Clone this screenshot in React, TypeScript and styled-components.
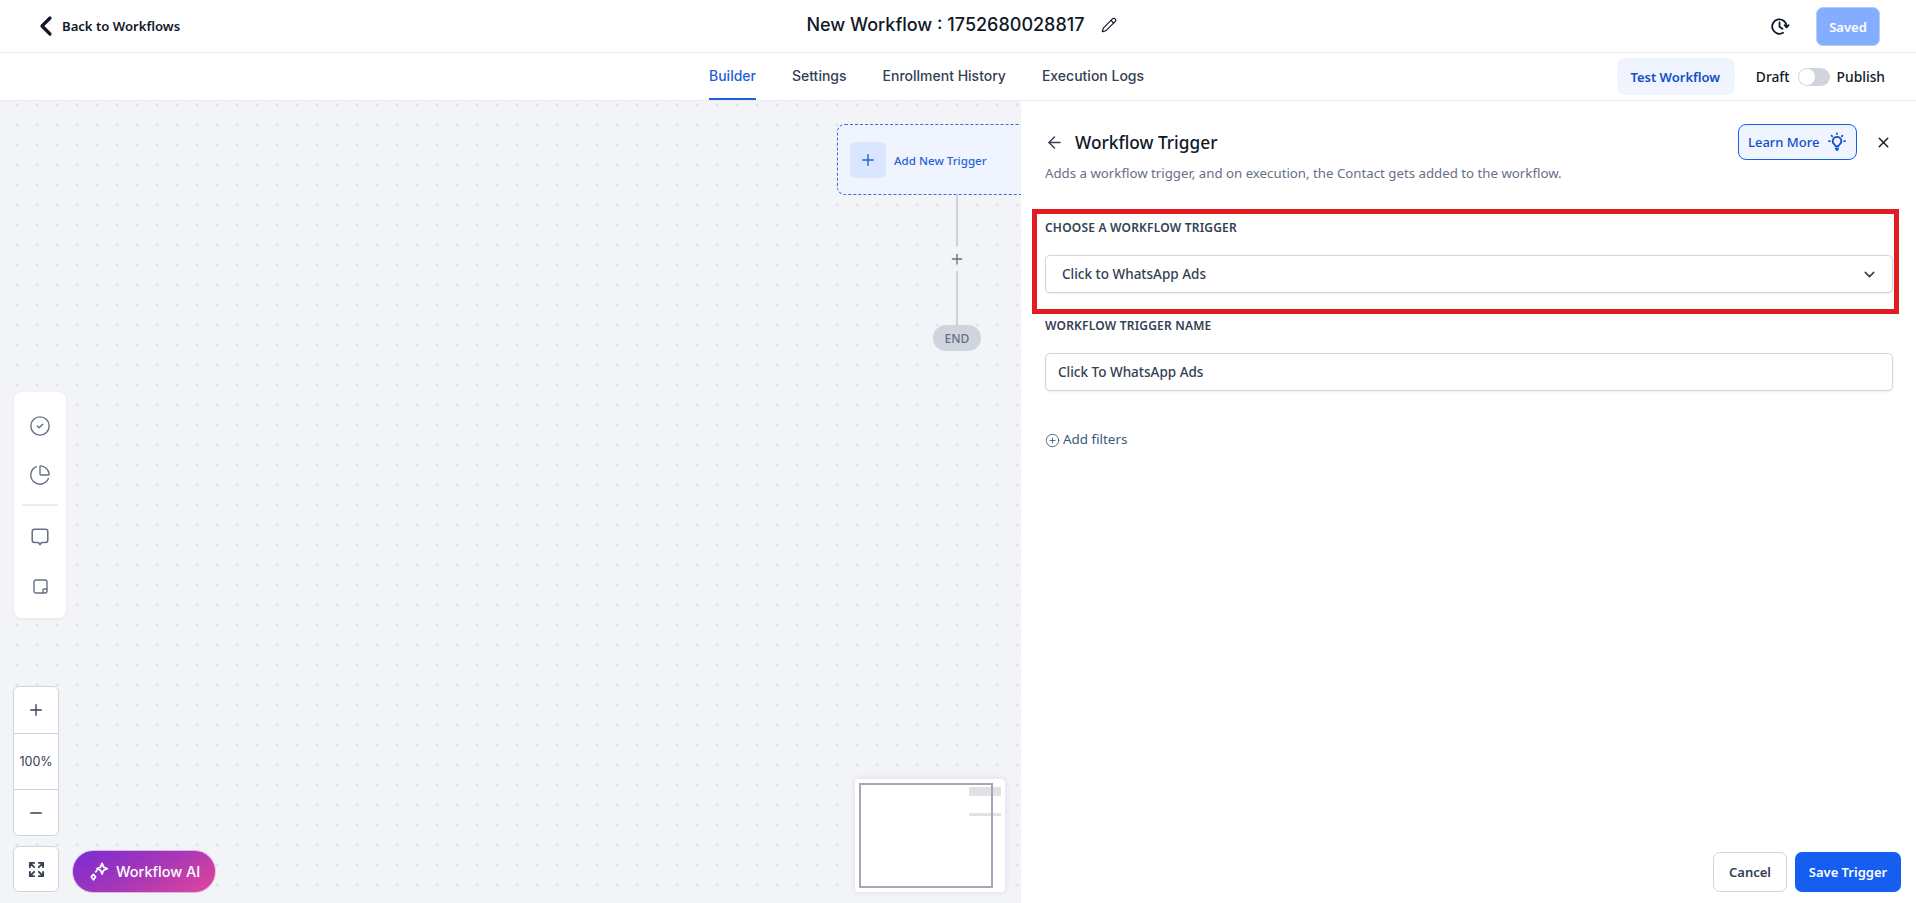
import React from "react";
import styled, { createGlobalStyle } from "styled-components";
import { ArrowLeft, ChartPie, ChevronDown, ChevronLeft, CircleCheck, CirclePlus, Minus, Pencil, Plus, X } from "lucide-react";

const Global = createGlobalStyle`
  html, body { margin: 0; padding: 0; height: 100%; background: #fff; overflow: hidden; }
  * { box-sizing: border-box; }
  body { font-family: "Noto Sans", "Open Sans", sans-serif; color: #101828; }
`;

const Page = styled.div`
  height: 903px; width: 1916px; display: flex; flex-direction: column; overflow: hidden; position: relative;
`;
const Header = styled.header`
  height: 53px; flex: none; display: grid; grid-template-columns: 1fr auto 1fr; align-items: center;
  padding: 0 36px 0 40px; border-bottom: 1px solid #eaecf0;
`;
const BackLink = styled.a`
  display: flex; align-items: center; gap: 0; font-size: 13.1px; font-weight: 600; color: #101828;
  svg { margin-left: -10px; margin-top: -1px; }
`;
const TitleWrap = styled.div`
  display: flex; align-items: center; gap: 16px; padding-left: 3px; padding-bottom: 3px;
`;
const Title = styled.h1`
  margin: 0; font: 500 18px "Inter", sans-serif; color: #101828;
`;
const HeaderRight = styled.div`
  display: flex; justify-content: flex-end; align-items: center; gap: 26px;
`;
const SavedButton = styled.button`
  width: 64px; height: 39px; border: 1px solid #b2ccff; border-radius: 7px; background: #84adff; color: #fff;
  font: 600 13px "Noto Sans", sans-serif; padding: 0; margin-top: 1px;
`;
const TabBar = styled.nav`
  height: 48px; flex: none; display: flex; align-items: stretch; justify-content: space-between;
  padding: 0 31px 0 709px; border-bottom: 1px solid #eaecf0;
`;
const TabList = styled.div`
  display: flex; gap: 36px;
`;
const Tab = styled.a<{ $active?: boolean }>`
  display: flex; align-items: center; height: 47px; padding-bottom: 1px; font: 500 14px "Inter", sans-serif;
  color: ${p => (p.$active ? "#1f5fd9" : "#344054")};
  border-bottom: 2px solid ${p => (p.$active ? "#1f5fd9" : "transparent")};
`;
const TabActions = styled.div`
  display: flex; align-items: center;
`;
const TestButton = styled.button`
  width: 118px; height: 37px; border: 0; border-radius: 8px; background: #eff4ff; color: #0f4fc9;
  font: 600 13px "Noto Sans", sans-serif; margin-right: 21px; padding: 0 1px 0 0;
`;
const StatusLabel = styled.span`
  font: 500 13.8px "Noto Sans", sans-serif; color: #101828;
`;
const Toggle = styled.span`
  width: 32px; height: 18px; border-radius: 9px; background: #d0d5dd; margin: 0 7px 0 8px; position: relative; display: block;
  &::after { content: ""; position: absolute; left: 1px; top: 1px; width: 16px; height: 16px; border-radius: 50%; background: #fff; }
`;
const Main = styled.main`
  flex: 1; display: flex; min-height: 0;
`;
const Canvas = styled.section`
  width: 1021px; flex: none; position: relative; overflow: hidden; background-color: #f2f4f8;
  background-image: radial-gradient(circle, #e0e3e9 1.3px, transparent 1.7px);
  background-size: 20px 20px; background-position: 7px -6px;
`;
const TriggerNode = styled.div`
  position: absolute; left: 837px; top: 23px; width: 240px; height: 71px; display: flex; align-items: center; gap: 8px;
  padding-left: 12px; background: #eff4ff; border: 1px dashed #3b6fd8; border-radius: 8px;
`;
const NodeIcon = styled.span`
  width: 36px; height: 36px; border-radius: 6px; background: #d9e6fd; color: #2a63d8; display: flex; align-items: center; justify-content: center;
`;
const NodeLabel = styled.span`
  font: 500 11.6px "Noto Sans", sans-serif; color: #2a63d8; padding-top: 2px;
`;
const Connector = styled.div<{ $top: number; $height: number }>`
  position: absolute; left: 956px; top: ${p => p.$top}px; height: ${p => p.$height}px; width: 2px; background: #ced1d8;
`;
const AddStep = styled.span`
  position: absolute; left: 949px; top: 150px; width: 16px; height: 16px; color: #667085; display: flex;
`;
const EndPill = styled.div`
  position: absolute; left: 933px; top: 224px; width: 48px; height: 26px; border-radius: 13px; background: #d0d5dd; color: #667085;
  font: 500 12px "Noto Sans", sans-serif; display: flex; align-items: center; justify-content: center;
`;
const ToolPanel = styled.div`
  position: absolute; left: 14px; top: 291px; width: 52px; height: 226px; background: #fff; border-radius: 7px;
  box-shadow: 0 1px 3px rgba(16,24,40,.08); display: flex; flex-direction: column; align-items: center; padding-top: 15px; color: #667085;
`;
const ToolIcon = styled.span`
  width: 38px; height: 38px; display: flex; align-items: center; justify-content: center;
  & + & { margin-top: 11px; }
`;
const ToolDivider = styled.hr`
  width: 36px; height: 2px; border: 0; background: #eaecf0; margin: 10px 0 12px;
`;
const ZoomBox = styled.div`
  position: absolute; left: 13px; top: 585px; width: 46px; height: 150px; background: #fff; border: 1px solid #d0d5dd; border-radius: 6px;
  display: grid; grid-template-rows: 46px 56px 1fr; color: #344054;
`;
const ZoomCell = styled.div`
  display: flex; align-items: center; justify-content: center; font: 400 12.5px "Inter", sans-serif; color: #344054;
  & + & { border-top: 1px solid #d0d5dd; }
`;
const FitButton = styled.div`
  position: absolute; left: 13px; top: 745px; width: 46px; height: 46px; background: #fff; border: 1px solid #d0d5dd; border-radius: 6px;
  display: flex; align-items: center; justify-content: center; color: #344054;
`;
const AiButton = styled.button`
  position: absolute; left: 72px; top: 749px; width: 144px; height: 43px; border-radius: 22px; border: 1px solid #d9b8e8;
  background: linear-gradient(150deg, #7a2bd4 0%, #a537b8 50%, #e4459a 100%); color: #fff; font: 500 14.5px "Inter", sans-serif;
  display: flex; align-items: center; gap: 6px; padding: 0 0 0 15px;
`;
const MiniMap = styled.div`
  position: absolute; left: 855px; top: 678px; width: 150px; height: 113px; background: #fff; border-radius: 4px;
  box-shadow: 0 0 6px rgba(16,24,40,.1);
`;
const MiniViewport = styled.div`
  position: absolute; left: 4px; top: 4px; width: 134px; height: 105px; border: 2px solid #a4a7bb;
`;
const MiniBlock = styled.div<{ $top: number; $height: number }>`
  position: absolute; left: 114px; top: ${p => p.$top}px; width: 32px; height: ${p => p.$height}px; background: #e2e2e2;
`;
const Panel = styled.aside`
  flex: 1; background: #fff; display: flex; flex-direction: column; padding: 0 23px 11px 24px; position: relative;
`;
const PanelHead = styled.div`
  height: 61px; padding-top: 21px; display: flex; align-items: center; color: #344054;
`;
const PanelTitle = styled.h2`
  margin: 0 0 0 11px; font: 500 17.3px "Noto Sans", sans-serif; color: #101828; flex: 1;
`;
const LearnButton = styled.button`
  width: 119px; height: 36px; border: 1px solid #155eef; border-radius: 8px; background: #eff4ff; color: #0f4fc9;
  font: 500 13px "Noto Sans", sans-serif; display: flex; align-items: center; gap: 8px; padding: 0 0 0 9px;
`;
const CloseIcon = styled.span`
  display: flex; color: #101828; margin: 0 1.5px 0 17.5px;
`;
const Sub = styled.p`
  margin: 2px 0 0; font: 400 13.25px/18px "Noto Sans", sans-serif; color: #667085;
`;
const FieldLabel = styled.label<{ $mt: number }>`
  display: block; margin-top: ${p => p.$mt}px; font: 600 12px/18px "Noto Sans", sans-serif; color: #344054; letter-spacing: .2px;
`;
const Control = styled.div<{ $pad: number }>`
  margin-top: 18px; height: 38px; border: 1px solid #d0d5dd; border-radius: 5px; background: #fff; display: flex; align-items: center;
  justify-content: space-between; padding: 0 14px 0 ${p => p.$pad}px; font: 500 13.5px "Noto Sans", sans-serif; color: #344054;
  box-shadow: 0 1px 2px rgba(16,24,40,.08);
`;
const AddFilters = styled.a`
  margin-top: 38px; display: flex; align-items: center; gap: 3px; font: 400 13.4px/20px "Noto Sans", sans-serif; color: #395a7a;
  svg { margin-top: 2px; }
`;
const Footer = styled.div`
  margin-top: auto; display: flex; justify-content: flex-end; gap: 8px; margin-right: -8px;
`;
const CancelButton = styled.button`
  width: 74px; height: 40px; background: #fff; border: 1px solid #d0d5dd; border-radius: 7px; color: #344054; font: 600 13px "Noto Sans", sans-serif;
`;
const SaveButton = styled.button`
  width: 106px; height: 40px; background: #155eef; border: 0; border-radius: 7px; color: #fff; font: 600 13px "Noto Sans", sans-serif;
`;
const Highlight = styled.div`
  position: absolute; left: 1032px; top: 209px; width: 867px; height: 105px; border: 5px solid #e31b23; pointer-events: none;
`;

const S = { fill: "none", stroke: "currentColor", strokeLinecap: "round" as const, strokeLinejoin: "round" as const };

const HistoryIcon = () => (
  <svg width="20" height="20" viewBox="0 0 20 20" {...S} strokeWidth="1.8">
    <path d="M16.6 10.5A7.2 7.2 0 1 0 13 16.8" />
    <path d="M14.6 9.2l2 2.2 2-2.2" />
    <path d="M9.5 6.5v4.3l3 1.9" />
  </svg>
);
const BulbIcon = () => (
  <svg width="20" height="20" viewBox="0 0 20 20" {...S} strokeWidth="1.7">
    <path d="M10 4.8a4.3 4.3 0 0 0-2.5 7.8c.5.4.9.9.9 1.5h3.2c0-.6.4-1.1.9-1.5A4.3 4.3 0 0 0 10 4.8z" />
    <path d="M8.8 16.4h2.4M9.4 18h1.2" />
    <path d="M10 1.3v.8M4.6 3.7l.6.6M15.4 3.7l-.6.6M2 9.2h.9M17.1 9.2h.9" />
  </svg>
);
const CommentIcon = () => (
  <svg width="20" height="20" viewBox="0 0 18 18" {...S} strokeWidth="1.4">
    <path d="M4 2h10a2 2 0 0 1 2 2v8a2 2 0 0 1-2 2h-3.6L9 15.8 7.6 14H4a2 2 0 0 1-2-2V4a2 2 0 0 1 2-2z" />
  </svg>
);
const NoteIcon = () => (
  <svg width="15" height="15" viewBox="0 0 15 15" {...S} strokeWidth="1.4">
    <rect x="1" y="1" width="13" height="13" rx="2" />
    <path d="M14 10h-3a1 1 0 0 0-1 1v3" />
  </svg>
);
const FitIcon = () => (
  <svg width="17" height="17" viewBox="0 0 18 18" {...S} strokeWidth="2">
    <path d="M2 6.5V2h4.5M2.5 2.5l4 4M16 6.5V2h-4.5M15.5 2.5l-4 4M2 11.5V16h4.5M2.5 15.5l4-4M16 11.5V16h-4.5M15.5 15.5l-4-4" />
  </svg>
);
const SparkIcon = () => (
  <svg width="22" height="22" viewBox="0 0 20 20" {...S} strokeWidth="1.6">
    <path d="M12.8 2.2l1.4 3.4 3.4 1.4-3.4 1.4-1.4 3.4-1.4-3.4L8 7l3.4-1.4z" />
    <path d="M5 12.2l1.9 2.3L5 17l-2-2.5z" />
    <path d="M7 9.8l1-1" />
  </svg>
);

export default function App() {
  return (
    <Page>
      <Global />
      <Header>
        <BackLink><ChevronLeft size={32} strokeWidth={2.4} />Back to Workflows</BackLink>
        <TitleWrap>
          <Title>New Workflow : 1752680028817</Title>
          <Pencil size={16} strokeWidth={1.7} />
        </TitleWrap>
        <HeaderRight>
          <HistoryIcon />
          <SavedButton>Saved</SavedButton>
        </HeaderRight>
      </Header>
      <TabBar>
        <TabList>
          <Tab $active>Builder</Tab>
          <Tab>Settings</Tab>
          <Tab>Enrollment History</Tab>
          <Tab>Execution Logs</Tab>
        </TabList>
        <TabActions>
          <TestButton>Test Workflow</TestButton>
          <StatusLabel>Draft</StatusLabel>
          <Toggle />
          <StatusLabel>Publish</StatusLabel>
        </TabActions>
      </TabBar>
      <Main>
        <Canvas>
          <TriggerNode>
            <NodeIcon><Plus size={18} /></NodeIcon>
            <NodeLabel>Add New Trigger</NodeLabel>
          </TriggerNode>
          <Connector $top={93} $height={52} />
          <AddStep><Plus size={16} /></AddStep>
          <Connector $top={170} $height={54} />
          <EndPill>END</EndPill>
          <ToolPanel>
            <ToolIcon><CircleCheck size={22} strokeWidth={1.5} /></ToolIcon>
            <ToolIcon><ChartPie size={22} strokeWidth={1.5} /></ToolIcon>
            <ToolDivider />
            <ToolIcon><CommentIcon /></ToolIcon>
            <ToolIcon><NoteIcon /></ToolIcon>
          </ToolPanel>
          <ZoomBox>
            <ZoomCell><Plus size={18} strokeWidth={1.8} /></ZoomCell>
            <ZoomCell>100%</ZoomCell>
            <ZoomCell><Minus size={18} strokeWidth={1.8} /></ZoomCell>
          </ZoomBox>
          <FitButton><FitIcon /></FitButton>
          <AiButton><SparkIcon />Workflow AI</AiButton>
          <MiniMap>
            <MiniBlock $top={8} $height={9} />
            <MiniBlock $top={34} $height={3} />
            <MiniViewport />
          </MiniMap>
        </Canvas>
        <Panel>
          <PanelHead>
            <ArrowLeft size={19} strokeWidth={1.8} />
            <PanelTitle>Workflow Trigger</PanelTitle>
            <LearnButton>Learn More<BulbIcon /></LearnButton>
            <CloseIcon><X size={17} strokeWidth={2} /></CloseIcon>
          </PanelHead>
          <Sub>Adds a workflow trigger, and on execution, the Contact gets added to the workflow.</Sub>
          <FieldLabel $mt={37}>CHOOSE A WORKFLOW TRIGGER</FieldLabel>
          <Control $pad={16}>Click to WhatsApp Ads<ChevronDown size={17} strokeWidth={2.2} /></Control>
          <FieldLabel $mt={24}>WORKFLOW TRIGGER NAME</FieldLabel>
          <Control $pad={12}>Click To WhatsApp Ads</Control>
          <AddFilters><CirclePlus size={15} strokeWidth={1.4} />Add filters</AddFilters>
          <Footer>
            <CancelButton>Cancel</CancelButton>
            <SaveButton>Save Trigger</SaveButton>
          </Footer>
        </Panel>
      </Main>
      <Highlight />
    </Page>
  );
}
